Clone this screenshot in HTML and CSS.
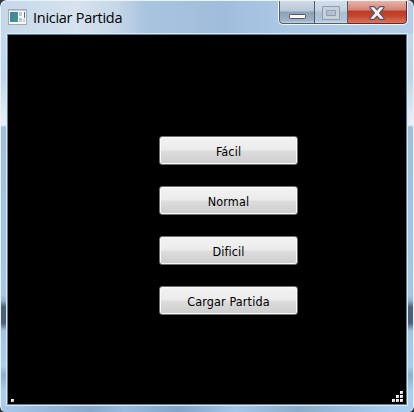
FILE: index.html
```html
<!DOCTYPE html>
<html lang="es">
<head>
<meta charset="utf-8">
<title>Iniciar Partida</title>
<link rel="stylesheet" href="styles.css">
</head>
<body>
<div class="window">
  <header class="titlebar">
    <svg class="app-icon" width="19" height="16" viewBox="0 0 19 16">
      <defs><linearGradient id="pic" x2="1" y2="1"><stop stop-color="#4b78b4"/><stop offset="1" stop-color="#3ca078"/></linearGradient></defs>
      <rect x=".5" y=".5" width="18" height="15" fill="#f7f8f8" stroke="#a2a9ae"/>
      <path d="M1 1.5h17" stroke="#c5cbd0"/>
      <rect x="2" y="3" width="8" height="10" fill="url(#pic)"/>
      <path d="M11 3h3v4h-3zM11 9h3v4h-3z" fill="#c4c8cc"/>
      <path d="M16 3h1v6h-1z" fill="#3d7795"/>
      <path d="M15 10h2v3h-2z" fill="#c8cccf"/>
    </svg>
    <h1 class="title">Iniciar Partida</h1>
    <div class="controls">
      <span class="control minimize"><svg width="18" height="6"><rect x=".5" y=".5" width="16" height="4" rx=".7" fill="#faf8f8" stroke="#535666"/></svg></span>
      <span class="control maximize"><svg width="18" height="14"><path d="M.5.5h17v13H.5zM4.500 4.500v5h9v-5z" fill="#c5d0da" fill-rule="evenodd" stroke="#929dac"/></svg></span>
      <span class="control close"><svg width="16" height="14" viewBox="0 0 16 14"><path d="M1 .7h4.200L8 3.900 10.800.7H15v1.200L10.600 7l4.400 5.100v1.200h-4.200L8 10.100l-2.800 3.200H1v-1.200L5.400 7 1 1.900z" fill="#f4f2f2" stroke="#555565" stroke-width="1.200" stroke-linejoin="round"/></svg></span>
    </div>
  </header>
  <main class="client">
    <nav class="menu">
      <button>Fácil</button>
      <button>Normal</button>
      <button>Dificil</button>
      <button>Cargar Partida</button>
    </nav>
    <footer class="status">
      <i class="dot"></i>
      <div class="grip"><i></i><i></i><i></i><i></i><i></i><i></i></div>
    </footer>
  </main>
</div>
</body>
</html>
```
FILE: styles.css
```css
* { box-sizing: border-box; }
body { margin: 0; background: #33383d; overflow: hidden; }
.window {
  width: 414px; height: 412px; padding: 0 6px 6px;
  border: 1px solid #e9f2f9; border-bottom: 0;
  border-radius: 7px 7px 6px 6px;
  background:
    linear-gradient(90deg, #a9c9e9, #86a8cb 22%, #98bcdf 30%, #81a4c8 43%, #a4c6e9 57%, #8baccb 72%, #a9cdee 94%) 0 100% / 100% 6px no-repeat,
    linear-gradient(90deg, #c4d8eb 0, #d6e2ee 18%, #c6d7e8 28%, #a9c4df 35%, #a0bddb 54%, #a9c7e4 67%, #b5cfe8 100%) 0 0 / 100% 33px no-repeat,
    linear-gradient(#c5d9ec 33px, #bfd3e7 75px, #e9f1f8 124px, #a2bedb 126px, #a6c7e8 294px, #90adc9 300px, #4b6075 306px, #4b6075 322px, #a4c4e5 330px, #a9ceef 365px, #8dafd1 374px, #a9ceef 390px);
}
.titlebar { display: flex; height: 33px; align-items: flex-start; }
.app-icon { margin: 8px 0 0 1px; }
.title {
  margin: 6px 0 0 6px; flex: 1; white-space: nowrap;
  font: 400 14.5px/21px "Open Sans", "Noto Sans", sans-serif;
  letter-spacing: -.28px; color: #000;
}
.controls {
  display: flex; width: 130px; height: 24px; margin-right: -1px;
  border: 1px solid #f0f6fb; border-top: 0; border-radius: 0 0 5px 5px;
  overflow: hidden;
}
.control {
  display: flex; align-items: flex-start; justify-content: center;
  border: 1px solid #505b6b; border-top: 0; border-left-width: 0;
  background: linear-gradient(#d0dae5, #b8c7d7 10px, #8d9fb4 11px, #a1b3c7 20px, #c5d8e9);
}
.minimize { width: 36px; border-left-width: 1px; border-bottom-left-radius: 4px; }
.minimize svg { margin: 13px 0 0 1px; }
.maximize { width: 33px; background: linear-gradient(#d2deeb, #c3d2e2 10px, #adbed1 11px, #b3c6d9 20px, #d1e1ee); }
.maximize svg { margin-top: 5px; }
.close {
  flex: 1; border-color: #70232a; border-bottom-right-radius: 4px;
  background: linear-gradient(#e8b3a8, #d58474 9px, #bd3b29 10px, #c4452d 15px, #d9785c 22px);
}
.close svg { margin-top: 5px; }
.client {
  display: flex; flex-direction: column; width: 400px; height: 371px;
  padding-top: 101px; background: #000;
  border: 1px solid #657e8e;
  box-shadow: 0 0 0 1px #d8ebf8;
}
.menu { display: flex; flex-direction: column; gap: 21px; margin-left: 151px; }
button {
  width: 139px; height: 29px; padding: 2px 0 0; color: #000;
  border: 1px solid #707070; border-radius: 3px;
  background: linear-gradient(#f3f3f3, #ebebeb 13px, #dddddd 14px, #cdcdcd);
  box-shadow: inset 0 0 0 1px #fafafa;
  font: 12.5px/16px "DejaVu Sans Condensed", "DejaVu Sans", sans-serif;
  letter-spacing: .12px;
}
.status { display: flex; flex: 1; align-items: flex-end; justify-content: space-between; padding: 0 3px 2px; }
i { width: 3px; height: 3px; background: linear-gradient(135deg, #fff 30%, #aaa); }
.grip { display: grid; grid-template-columns: repeat(3, 3px); gap: 1px; }
.grip i:nth-child(1) { grid-column: 3; }
.grip i:nth-child(2) { grid-column: 2; }
```
